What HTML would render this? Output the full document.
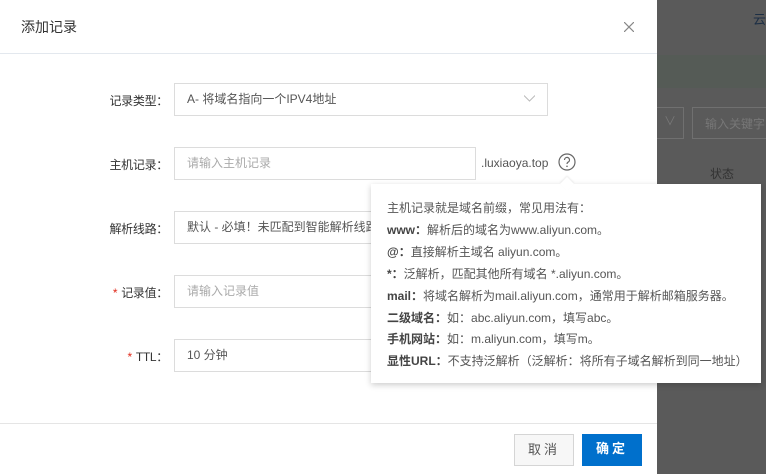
<!DOCTYPE html>
<html><head><meta charset="utf-8"><style>
*{box-sizing:border-box;margin:0;padding:0}
body{width:766px;height:474px;overflow:hidden;position:relative;background:#5a5a5a;font-family:"Liberation Sans","Noto Sans CJK SC",sans-serif;font-size:12px;color:#333}
.abs{position:absolute}
.dlg{left:0;top:0;width:657px;height:474px;background:#fff}
.hdr{left:0;top:0;width:657px;height:54px;border-bottom:1px solid #e3e8ee}
.title{left:21px;top:17px;font-size:14px;color:#333}
.lbl{right:0;width:168px;text-align:right;color:#333;font-size:12px;letter-spacing:-0.3px}
.inp{border:1px solid #dcdcdc;height:33px;padding-left:12px;line-height:31px;color:#555}
.ph{color:#aaa}
.star{color:#e0291a;margin-right:4px}
.pop{left:371px;top:184px;width:390px;height:199px;background:#fff;box-shadow:0 2px 6px rgba(0,0,0,.2);padding:14px 0 0 16px;color:#555;font-size:12px;line-height:21.9px}
.pop b{color:#444;font-weight:bold}
.btn{top:434px;height:32px;width:60px;text-align:center;line-height:30px;font-size:13px;letter-spacing:3px}
</style></head><body>
<div class="abs" style="left:657px;top:55px;width:109px;height:33px;background:#555b56"></div>
<div class="abs" style="left:753px;top:9px;color:#1d2f45;font-size:13px">云</div>
<div class="abs" style="left:620px;top:107px;width:64px;height:32px;border:1px solid #707070"></div>
<div class="abs" style="left:664px;top:112px;color:#777;font-size:12px">∨</div>
<div class="abs" style="left:692px;top:107px;width:80px;height:32px;border:1px solid #707070;color:#777;padding:7px 0 0 12px">输入关键字</div>
<div class="abs" style="left:710px;top:165px;color:#333;font-size:12px">状态</div>

<div class="abs dlg"></div>
<div class="abs hdr"></div>
<div class="abs title">添加记录</div>
<svg class="abs" style="left:624px;top:22px" width="10" height="10"><path d="M0 0L10 10M10 0L0 10" stroke="#888" stroke-width="1.2"/></svg>

<div class="abs lbl" style="top:92px;left:0">记录类型：</div>
<div class="abs inp" style="left:174px;top:83px;width:374px">A- 将域名指向一个IPV4地址</div>
<svg class="abs" style="left:524px;top:95px" width="11" height="7"><path d="M0 0.5L5.5 6L11 0.5" stroke="#bbb" fill="none"/></svg>

<div class="abs lbl" style="top:156px;left:0">主机记录：</div>
<div class="abs inp ph" style="left:174px;top:147px;width:302px">请输入主机记录</div>
<div class="abs" style="left:481px;top:156px;color:#555">.luxiaoya.top</div>
<svg class="abs" style="left:558px;top:153px" width="18" height="18"><circle cx="9" cy="9" r="8" stroke="#666" fill="none" stroke-width="1.2"/><path d="M6.5 7a2.5 2.5 0 1 1 3.5 2.2c-.7.4-1 .8-1 1.8" stroke="#666" fill="none" stroke-width="1.2"/><circle cx="9" cy="13.3" r=".8" fill="#666"/></svg>

<div class="abs lbl" style="top:220px;left:0">解析线路：</div>
<div class="abs inp" style="left:174px;top:211px;width:374px;overflow:hidden;white-space:nowrap">默认 - 必填！未匹配到智能解析线路时，返回【默认】线路设置结果</div>

<div class="abs lbl" style="top:284px;left:0"><span class="star">*</span>记录值：</div>
<div class="abs inp ph" style="left:174px;top:275px;width:374px">请输入记录值</div>

<div class="abs lbl" style="top:348px;left:0"><span class="star">*</span>TTL：</div>
<div class="abs inp" style="left:174px;top:339px;width:374px">10 分钟</div>

<div class="abs" style="left:0;top:423px;width:657px;height:1px;background:#e5e5e5"></div>
<div class="abs btn" style="left:514px;border:1px solid #d5d5d5;background:#f7f7f7;color:#555">取消</div>
<div class="abs btn" style="left:582px;background:#0070cc;color:#fff;font-weight:bold">确定</div>

<div class="abs pop">
<div>主机记录就是域名前缀，常见用法有：</div>
<div><b>www：</b>解析后的域名为www.aliyun.com。</div>
<div><b>@：</b>直接解析主域名 aliyun.com。</div>
<div><b>*：</b>泛解析，匹配其他所有域名 *.aliyun.com。</div>
<div><b>mail：</b>将域名解析为mail.aliyun.com，通常用于解析邮箱服务器。</div>
<div><b>二级域名：</b>如：abc.aliyun.com，填写abc。</div>
<div><b>手机网站：</b>如：m.aliyun.com，填写m。</div>
<div><b>显性URL：</b>不支持泛解析（泛解析：将所有子域名解析到同一地址）</div>
</div>
<div class="abs" style="left:562px;top:179px;width:10px;height:10px;background:#fff;transform:rotate(45deg);box-shadow:-1px -1px 2px rgba(0,0,0,.08)"></div>
</body></html>
